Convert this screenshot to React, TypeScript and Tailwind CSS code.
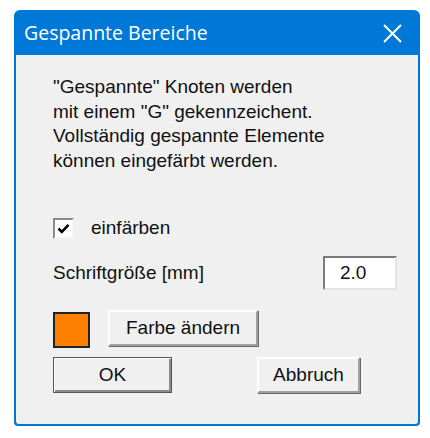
import React from "react";

const raised =
  "border-2 border-t-white border-l-white border-r-[#a0a0a0] border-b-[#a0a0a0] shadow-[1px_1px_0_0_#696969]";

export default function App() {
  return (
    <div className="w-[430px] h-[438px] bg-white pt-[10px] pl-[14px] font-['Liberation_Sans',Arial,sans-serif]">
      <div className="w-[406px] h-[416px] flex flex-col bg-[#0078d7] rounded-t-[6px] rounded-b-[4px] p-[2px] pt-0">
        {/* Title bar */}
        <div className="h-[45px] shrink-0 flex items-center justify-between pl-[8px] pr-[16px] text-white">
          <span className="text-[19.5px] font-['Open_Sans',sans-serif]">Gespannte Bereiche</span>
          <svg width="19" height="19" viewBox="0 0 19 19" className="mt-[1px]">
            <path d="M1 1 L18 18 M18 1 L1 18" stroke="white" strokeWidth="2" />
          </svg>
        </div>

        {/* Client area */}
        <div className="flex-1 bg-[#f0f0f0] rounded-b-[3px] pl-[37px] pr-[21px] pt-[20px] text-[19px] text-[#111] leading-[24.5px]">
          <p>"Gespannte" Knoten werden</p>
          <p>mit einem "G" gekennzeichent.</p>
          <p>Vollständig gespannte Elemente</p>
          <p>können eingefärbt werden.</p>

          <div className="mt-[44px] flex items-center h-[22px]">
            <div className="w-[21px] h-[21px] bg-white border-2 border-t-[#8a8a8a] border-l-[#8a8a8a] border-r-[#f4f4f4] border-b-[#f4f4f4] flex items-center justify-center">
              <svg width="13" height="11" viewBox="0 0 13 11">
                <path d="M1.5 5.5 L4.8 8.8 L11.5 1.8" fill="none" stroke="#000" strokeWidth="2.6" />
              </svg>
            </div>
            <span className="ml-[17px]">einfärben</span>
          </div>

          <div className="mt-[17px] h-[34px] flex items-center justify-between">
            <span>Schriftgröße [mm]</span>
            <div className="w-[74px] h-[34px] bg-white border-2 border-t-[#7a7a7a] border-l-[#7a7a7a] border-r-[#e4e4e4] border-b-[#e4e4e4] flex items-center pl-[15px] pt-[1px]">
              2.0
            </div>
          </div>

          <div className="mt-[20px] h-[38px] flex items-start">
            <div className="mt-[2px] w-[37px] h-[36px] bg-[#ff8000] border-2 border-[#222]" />
            <button className={`ml-[18px] w-[150px] h-[36px] bg-[#f0f0f0] ${raised} flex items-center justify-center`}>
              Farbe ändern
            </button>
          </div>

          <div className="mt-[9px] flex items-center">
            <button className="w-[119px] h-[36px] bg-[#f0f0f0] border border-[#555] shadow-[inset_1px_1px_0_0_#fff,inset_-2px_-2px_0_0_#8a8a8a] flex items-center justify-center">
              OK
            </button>
            <button className={`ml-[85px] w-[103px] h-[36px] bg-[#f0f0f0] ${raised} flex items-center justify-center`}>
              Abbruch
            </button>
          </div>
        </div>
      </div>
    </div>
  );
}
